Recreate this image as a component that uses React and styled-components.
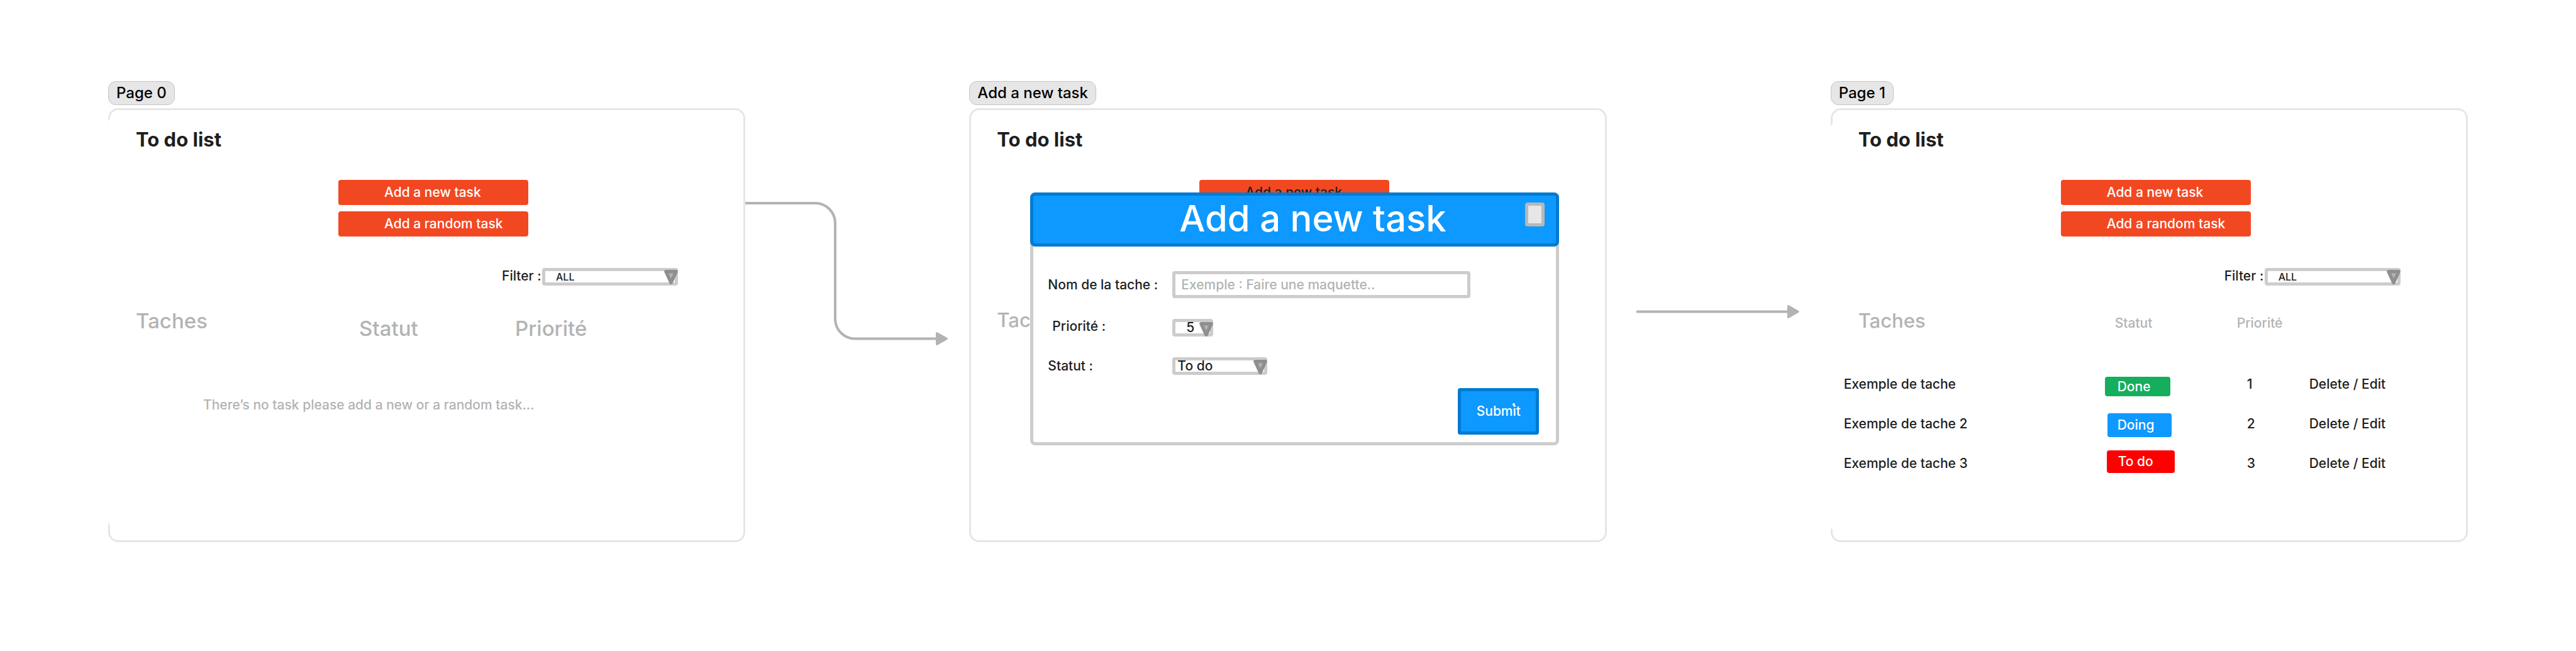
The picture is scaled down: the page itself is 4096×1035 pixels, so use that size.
import React from "react";
import styled, { createGlobalStyle } from "styled-components";

const color = {
  ink: "#1e1e1e",
  muted: "#b3b3b3",
  line: "#e6e6e6",
  box: "#cccccc",
  orange: "#f24822",
  blue: "#0d99ff",
  blueDark: "#007ad2",
  green: "#14ae5c",
  red: "#ff0000",
};

const GlobalStyle = createGlobalStyle`
  *, *::before, *::after { box-sizing: border-box; }
  body {
    margin: 0;
    background: #fff;
    color: ${color.ink};
    font-family: Inter, "Liberation Sans", sans-serif;
    font-size: 21px;
    font-weight: 500;
    line-height: 28px;
  }
  button, input, select { font: inherit; color: inherit; margin: 0; }
`;

const Board = styled.main`
  display: grid;
  grid-template-columns: minmax(0, 1fr) 356px minmax(0, 1fr) 356px minmax(0, 1fr);
  align-items: end;
  align-content: start;
  min-height: 100vh;
  padding: 129px 172px;
`;

const Section = styled.section`
  display: flex;
  flex-direction: column;
  align-items: flex-start;
  gap: 5px;
`;

const SectionLabel = styled.h2`
  margin: 0;
  padding: 0 12px;
  border: 1px solid #c4c4c4;
  border-radius: 12px;
  background: ${color.line};
  color: #000;
  font-size: 24px;
  font-weight: 500;
  line-height: 36px;
`;

const Frame = styled.div`
  position: relative;
  display: flex;
  flex-direction: column;
  align-self: stretch;
  min-height: 690px;
  border: 3px solid ${color.line};
  border-radius: 16px;
`;

/* The sheet reaches over the left edge of its frame. */
const Sheet = styled.div`
  flex: 1;
  margin: ${(p) => p.$inset - 3}px 0 ${(p) => p.$bottom - 3}px -3px;
  padding-top: ${(p) => 30 - p.$inset}px;
  border-radius: 8px;
  background: ${(p) => (p.$clear ? "transparent" : "#fff")};
`;

const Title = styled.h1`
  margin: 0 0 44px 44px;
  font-size: 31px;
  font-weight: 700;
  line-height: 40px;
`;

const Actions = styled.div`
  display: flex;
  flex-direction: column;
  gap: 10px;
  width: 302px;
  margin-left: 366px;
`;

const ActionButton = styled.button`
  height: 40px;
  padding: 0 0 0 73px;
  border: 0;
  border-radius: 4px;
  background: ${color.orange};
  color: ${(p) => (p.$dark ? color.ink : "#fff")};
  text-align: left;
`;

const FilterRow = styled.div`
  display: flex;
  align-items: flex-start;
  margin: 50px 0 36px 626px;
`;

const FilterLabel = styled.label`
  flex: 0 0 64px;
  line-height: 26px;
  white-space: nowrap;
`;

const SelectWrap = styled.div`
  position: relative;
  width: ${(p) => p.$width}px;
  height: 28px;
`;

const SelectBox = styled.select`
  display: block;
  appearance: none;
  width: 100%;
  height: 28px;
  padding: 0 0 0 ${(p) => p.$indent}px;
  border: 5px solid ${color.box};
  border-radius: 4px;
  background: #fff;
  font-size: ${(p) => (p.$small ? 16 : 21)}px;
  line-height: 18px;
`;

const Arrow = styled.svg`
  position: absolute;
  top: ${(p) => p.$top}px;
  right: 0;
  width: 22px;
  height: 23px;
  pointer-events: none;
`;

const Table = styled.table`
  width: 100%;
  margin-top: ${(p) => p.$top || 0}px;
  border-collapse: collapse;
  table-layout: fixed;
`;

const HeadCell = styled.th`
  height: ${(p) => p.$height || 40}px;
  padding: 0 0 ${(p) => p.$below || 0}px ${(p) => p.$indent || 0}px;
  color: ${color.muted};
  font-size: ${(p) => p.$size}px;
  font-weight: 500;
  line-height: 40px;
  text-align: left;
  vertical-align: ${(p) => p.$valign || "baseline"};
`;

const Cell = styled.td`
  height: 63px;
  padding: 0 0 0 ${(p) => p.$indent || 0}px;
`;

const EmptyCell = styled.td`
  padding: 88px 0 0 151px;
  color: ${color.muted};
`;

const statusLook = {
  Done: { color: color.green, width: 104, height: 31, margin: "8px 0 0 0", indent: 20 },
  Doing: { color: color.blue, width: 102, height: 38, margin: "4px 0 0 4px", indent: 16 },
  "To do": { color: color.red, width: 108, height: 36, margin: "0 0 6px 3px", indent: 18 },
};

const Badge = styled.span`
  display: flex;
  align-items: center;
  width: ${(p) => p.$look.width}px;
  height: ${(p) => p.$look.height}px;
  margin: ${(p) => p.$look.margin};
  padding-left: ${(p) => p.$look.indent}px;
  border-radius: 4px;
  background: ${(p) => p.$look.color};
  color: #fff;
`;

const TextButton = styled.button`
  padding: 0;
  border: 0;
  background: none;
`;

const Connector = styled.svg`
  display: block;
  width: 100%;
  height: 690px;
  fill: none;
  stroke: ${color.muted};
  stroke-width: 6;
  stroke-linejoin: round;
  stroke-linecap: ${(p) => (p.$round ? "round" : "butt")};
`;

const Dialog = styled.div`
  position: absolute;
  top: 131px;
  left: 94px;
  width: 841px;
  border: 5px solid ${color.box};
  border-radius: 8px;
  background: #fff;
`;

const DialogHeader = styled.header`
  display: flex;
  align-items: flex-start;
  justify-content: space-between;
  height: 86px;
  margin: -5px -5px 0;
  padding: 0 18px 0 232px;
  border: 5px solid ${color.blueDark};
  border-radius: 8px;
  background: ${color.blue};
`;

const DialogTitle = styled.h2`
  margin: 0;
  color: #fff;
  font-size: 58px;
  font-weight: 500;
  line-height: 72px;
  white-space: nowrap;
`;

const CloseButton = styled.button`
  width: 31px;
  height: 38px;
  margin-top: 11px;
  padding: 0;
  border: 5px solid #b8b8b8;
  border-radius: 4px;
  background: ${color.line};
`;

const Form = styled.form`
  display: flex;
  flex-direction: column;
  gap: 33px;
  padding: 39px 27px 12px 23px;
`;

const Field = styled.div`
  display: flex;
  align-items: ${(p) => p.$align || "center"};
`;

const FieldLabel = styled.label`
  flex: 0 0 198px;
  padding-left: ${(p) => p.$indent || 0}px;
  line-height: 24px;
`;

const TextInput = styled.input`
  width: 474px;
  height: 43px;
  padding: 0 9px;
  border: 5px solid ${color.box};
  border-radius: 4px;
  background: #fff;
  &::placeholder { color: ${color.muted}; opacity: 1; }
`;

const SubmitButton = styled.button`
  position: relative;
  align-self: flex-end;
  width: 129px;
  height: 74px;
  margin-top: -12px;
  padding: 0;
  border: 5px solid ${color.blueDark};
  border-radius: 4px;
  background: ${color.blue};
  color: #fff;

  &::after {
    content: "";
    position: absolute;
    top: 19px;
    right: 33px;
    width: 4px;
    height: 4px;
    border-radius: 50%;
    background: #fff;
  }
`;

function Dropdown({ id, width, indent, small, arrowTop, value }) {
  return (
    <SelectWrap $width={width}>
      <SelectBox id={id} $indent={indent} $small={small} defaultValue={value}>
        <option>{value}</option>
      </SelectBox>
      <Arrow $top={arrowTop} viewBox="0 0 32 34" aria-hidden="true">
        <path
          d="M4 4H28L16 30Z"
          fill="#b3b3b3"
          stroke="#8f8f8f"
          strokeWidth="8"
          strokeLinejoin="round"
        />
      </Arrow>
    </SelectWrap>
  );
}

function Filter({ id }) {
  return (
    <FilterRow>
      <FilterLabel htmlFor={id}>Filter :</FilterLabel>
      <Dropdown id={id} width={216} indent={17} small arrowTop={3} value="ALL" />
    </FilterRow>
  );
}

const tasks = [
  { name: "Exemple de tache", status: "Done", priority: 1 },
  { name: "Exemple de tache 2", status: "Doing", priority: 2 },
  { name: "Exemple de tache 3", status: "To do", priority: 3 },
];

function EmptyPage() {
  return (
    <Section>
      <SectionLabel>Page 0</SectionLabel>
      <Frame>
        <Sheet $inset={15} $bottom={26}>
          <Title>To do list</Title>
          <Actions>
            <ActionButton>Add a new task</ActionButton>
            <ActionButton>Add a random task</ActionButton>
          </Actions>
          <Filter id="filter-empty" />
          <Table>
            <colgroup>
              <col width="399" />
              <col width="248" />
              <col />
            </colgroup>
            <thead>
              <tr>
                <HeadCell $size={33} $indent={44} $height={52} $valign="top">Taches</HeadCell>
                <HeadCell $size={33} $valign="bottom">Statut</HeadCell>
                <HeadCell $size={33} $valign="bottom">Priorité</HeadCell>
              </tr>
            </thead>
            <tbody>
              <tr>
                <EmptyCell colSpan={3}>There’s no task please add a new or a random task...</EmptyCell>
              </tr>
            </tbody>
          </Table>
        </Sheet>
      </Frame>
    </Section>
  );
}

function DialogPage() {
  return (
    <Section>
      <SectionLabel>Add a new task</SectionLabel>
      <Frame>
        <Sheet $inset={15} $bottom={26} $clear>
          <Title>To do list</Title>
          <Actions>
            <ActionButton $dark>Add a new task</ActionButton>
          </Actions>
          <Table $top={163}>
            <thead>
              <tr>
                <HeadCell $size={31} $indent={44}>Taches</HeadCell>
              </tr>
            </thead>
          </Table>
        </Sheet>
        <Dialog role="dialog" aria-labelledby="dialog-title">
          <DialogHeader>
            <DialogTitle id="dialog-title">Add a new task</DialogTitle>
            <CloseButton type="button" aria-label="Close" />
          </DialogHeader>
          <Form onSubmit={(e) => e.preventDefault()}>
            <Field>
              <FieldLabel htmlFor="task-name">Nom de la tache :</FieldLabel>
              <TextInput id="task-name" type="text" placeholder="Exemple : Faire une maquette.." />
            </Field>
            <Field $align="flex-start">
              <FieldLabel htmlFor="task-priority" $indent={7}>Priorité :</FieldLabel>
              <Dropdown id="task-priority" width={65} indent={17} arrowTop={5} value="5" />
            </Field>
            <Field>
              <FieldLabel htmlFor="task-status">Statut :</FieldLabel>
              <Dropdown id="task-status" width={151} indent={3} arrowTop={4} value="To do" />
            </Field>
            <SubmitButton type="submit">Submit</SubmitButton>
          </Form>
        </Dialog>
      </Frame>
    </Section>
  );
}

function TasksPage() {
  return (
    <Section>
      <SectionLabel>Page 1</SectionLabel>
      <Frame>
        <Sheet $inset={23} $bottom={18}>
          <Title>To do list</Title>
          <Actions>
            <ActionButton>Add a new task</ActionButton>
            <ActionButton>Add a random task</ActionButton>
          </Actions>
          <Filter id="filter-tasks" />
          <Table>
            <colgroup>
              <col width="436" />
              <col width="210" />
              <col width="115" />
              <col />
            </colgroup>
            <thead>
              <tr>
                <HeadCell $size={31} $indent={44} $below={49}>Taches</HeadCell>
                <HeadCell $size={21} $indent={16}>Statut</HeadCell>
                <HeadCell $size={21}>Priorité</HeadCell>
                <td />
              </tr>
            </thead>
            <tbody>
              {tasks.map((task) => (
                <tr key={task.name}>
                  <Cell $indent={21}>{task.name}</Cell>
                  <Cell>
                    <Badge $look={statusLook[task.status]}>{task.status}</Badge>
                  </Cell>
                  <Cell $indent={16}>{task.priority}</Cell>
                  <Cell>
                    <TextButton>Delete</TextButton> / <TextButton>Edit</TextButton>
                  </Cell>
                </tr>
              ))}
            </tbody>
          </Table>
        </Sheet>
      </Frame>
    </Section>
  );
}

export default function App() {
  return (
    <>
      <GlobalStyle />
      <Board>
        <EmptyPage />
        <Connector viewBox="0 0 528 1024" aria-hidden="true">
          <path d="M0 224H165A47 47 0 0 1 212 271V497A47 47 0 0 0 259 544H452" />
          <path d="M452 531L475 544L452 557Z" fill={color.muted} strokeWidth="5" />
        </Connector>
        <DialogPage />
        <Connector $round viewBox="0 0 528 1024" aria-hidden="true">
          <path d="M72 480H428" />
          <path d="M428 467L451 480L428 493Z" fill={color.muted} strokeWidth="5" />
        </Connector>
        <TasksPage />
      </Board>
    </>
  );
}
